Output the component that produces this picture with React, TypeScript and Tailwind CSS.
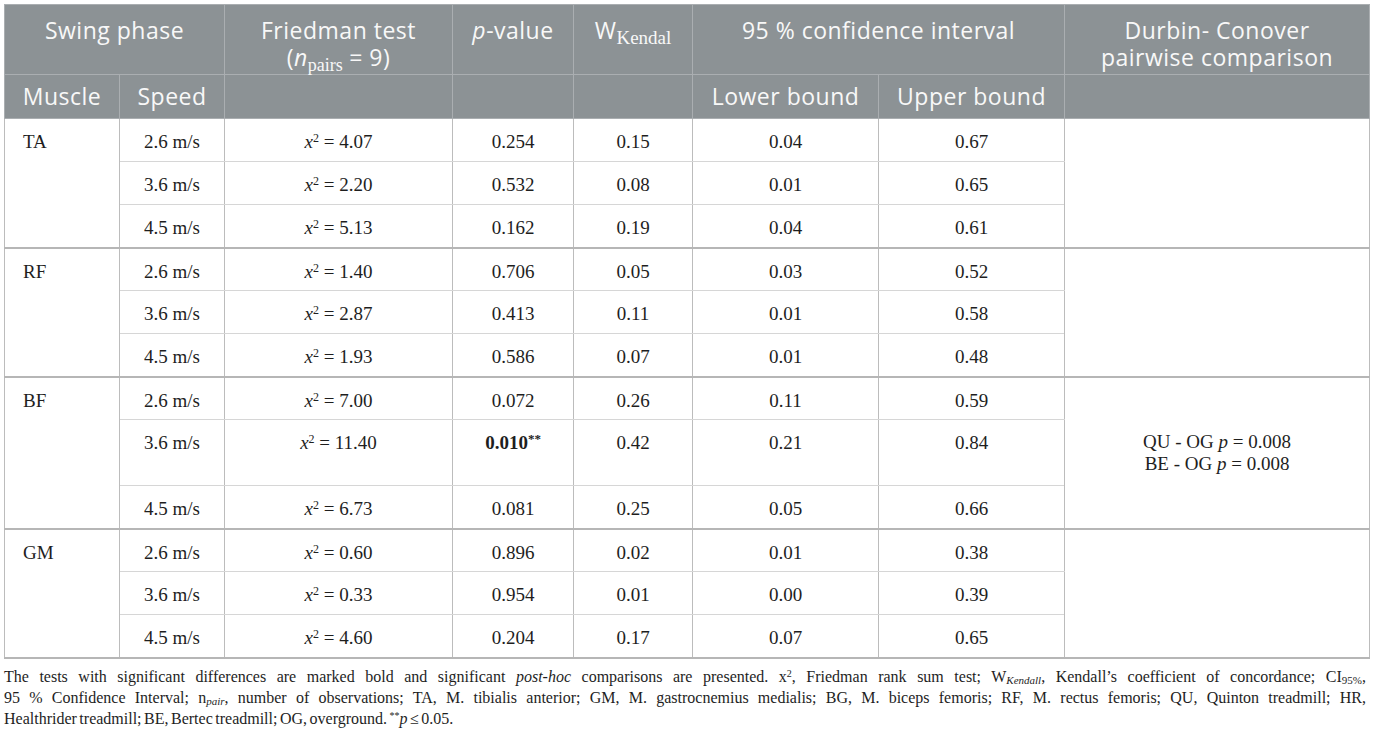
import type { ReactNode } from "react"

type Row = {
  speed: string
  chi: string
  p: ReactNode
  w: string
  lo: string
  hi: string
  tall?: boolean
}

type Group = {
  muscle: string
  rows: Row[]
  durbin?: ReactNode
}

const P = () => <span className="italic">p</span>

const groups: Group[] = [
  {
    muscle: "TA",
    rows: [
      { speed: "2.6 m/s", chi: "4.07", p: "0.254", w: "0.15", lo: "0.04", hi: "0.67" },
      { speed: "3.6 m/s", chi: "2.20", p: "0.532", w: "0.08", lo: "0.01", hi: "0.65" },
      { speed: "4.5 m/s", chi: "5.13", p: "0.162", w: "0.19", lo: "0.04", hi: "0.61" },
    ],
  },
  {
    muscle: "RF",
    rows: [
      { speed: "2.6 m/s", chi: "1.40", p: "0.706", w: "0.05", lo: "0.03", hi: "0.52" },
      { speed: "3.6 m/s", chi: "2.87", p: "0.413", w: "0.11", lo: "0.01", hi: "0.58" },
      { speed: "4.5 m/s", chi: "1.93", p: "0.586", w: "0.07", lo: "0.01", hi: "0.48" },
    ],
  },
  {
    muscle: "BF",
    rows: [
      { speed: "2.6 m/s", chi: "7.00", p: "0.072", w: "0.26", lo: "0.11", hi: "0.59" },
      {
        speed: "3.6 m/s",
        chi: "11.40",
        p: <span className="font-bold">0.010<sup className="text-[13px]">**</sup></span>,
        w: "0.42",
        lo: "0.21",
        hi: "0.84",
        tall: true,
      },
      { speed: "4.5 m/s", chi: "6.73", p: "0.081", w: "0.25", lo: "0.05", hi: "0.66" },
    ],
    durbin: (
      <>
        <div>QU - OG <P /> = 0.008</div>
        <div>BE - OG <P /> = 0.008</div>
      </>
    ),
  },
  {
    muscle: "GM",
    rows: [
      { speed: "2.6 m/s", chi: "0.60", p: "0.896", w: "0.02", lo: "0.01", hi: "0.38" },
      { speed: "3.6 m/s", chi: "0.33", p: "0.954", w: "0.01", lo: "0.00", hi: "0.39" },
      { speed: "4.5 m/s", chi: "4.60", p: "0.204", w: "0.17", lo: "0.07", hi: "0.65" },
    ],
  },
]

const th =
  "bg-[#8c9295] text-[#f8f8f8] font-normal text-center align-top border border-[#aaaeb1] px-2"

export default function App() {
  return (
    <div className="bg-white min-h-[738px] pl-[4px] pt-[4px] font-['Liberation_Serif','Times_New_Roman',serif] text-[#1e1e1e]">
      <table className="table-fixed border-collapse w-[1365px] border border-[#bdbdbd]">
        <colgroup>
          <col className="w-[115px]" />
          <col className="w-[105px]" />
          <col className="w-[228px]" />
          <col className="w-[121px]" />
          <col className="w-[119px]" />
          <col className="w-[186px]" />
          <col className="w-[186px]" />
          <col className="w-[305px]" />
        </colgroup>
        <thead className="font-['Open_Sans',sans-serif] text-[23px] tracking-[0.5px] leading-[27px]">
          <tr className="h-[70px]">
            <th colSpan={2} className={`${th} pt-[12px]`}>Swing phase</th>
            <th className={`${th} pt-[12px]`}>
              Friedman test
              <br />
              (<span className="italic">n</span>
              <sub className="font-['Liberation_Serif',serif] text-[18px] tracking-normal">pairs</sub> = 9)
            </th>
            <th className={`${th} pt-[12px]`}>
              <span className="italic">p</span>-value
            </th>
            <th className={`${th} pt-[12px]`}>
              W<sub className="font-['Liberation_Serif',serif] text-[19px] tracking-normal">Kendal</sub>
            </th>
            <th colSpan={2} className={`${th} pt-[12px]`}>95 % confidence interval</th>
            <th className={`${th} pt-[12px]`}>
              Durbin- Conover
              <br />
              pairwise comparison
            </th>
          </tr>
          <tr className="h-[44px]">
            <th className={`${th} pt-[8px]`}>Muscle</th>
            <th className={`${th} pt-[8px]`}>Speed</th>
            <th className={th} />
            <th className={th} />
            <th className={th} />
            <th className={`${th} pt-[8px]`}>Lower bound</th>
            <th className={`${th} pt-[8px]`}>Upper bound</th>
            <th className={th} />
          </tr>
        </thead>
        <tbody className="text-[19px] leading-[22px]">
          {groups.map((g) =>
            g.rows.map((r, ri) => {
              const rowLine =
                ri === 2 ? "border-b-2 border-b-[#b6b6b6]" : "border-b border-b-[#d6d6d6]"
              const cell = `align-top pt-[12px] text-center border-x border-x-[#bcbcbc] ${rowLine}`
              return (
                <tr key={g.muscle + r.speed} className={r.tall ? "h-[66px]" : "h-[43px]"}>
                  {ri === 0 && (
                    <td
                      rowSpan={3}
                      className="align-top pt-[12px] pl-[18px] text-left border-x border-x-[#bcbcbc] border-b-2 border-b-[#b6b6b6]"
                    >
                      {g.muscle}
                    </td>
                  )}
                  <td className={cell}>{r.speed}</td>
                  <td className={cell}>
                    <span className="italic">x</span>
                    <sup className="text-[12px]">2</sup> = {r.chi}
                  </td>
                  <td className={cell}>{r.p}</td>
                  <td className={cell}>{r.w}</td>
                  <td className={cell}>{r.lo}</td>
                  <td className={cell}>{r.hi}</td>
                  {ri === 0 && (
                    <td
                      rowSpan={3}
                      className="align-middle text-center border-x border-x-[#bcbcbc] border-b-2 border-b-[#b6b6b6]"
                    >
                      {g.durbin}
                    </td>
                  )}
                </tr>
              )
            })
          )}
        </tbody>
      </table>

      <div className="w-[1362px] mt-[7px] text-[16px] leading-[21px] text-[#1e1e1e]">
        <div className="text-justify [text-align-last:justify]">
          The tests with significant differences are marked bold and significant{" "}
          <span className="italic">post-hoc</span> comparisons are presented. x<sup className="text-[10px]">2</sup>,
          Friedman rank sum test; W<sub className="italic text-[11px]">Kendall</sub>, Kendall’s coefficient of
          concordance; CI<sub className="text-[11px]">95%</sub>,
        </div>
        <div className="text-justify [text-align-last:justify]">
          95 % Confidence Interval; n<sub className="italic text-[11px]">pair</sub>, number of observations; TA, M.
          tibialis anterior; GM, M. gastrocnemius medialis; BG, M. biceps femoris; RF, M. rectus femoris; QU, Quinton
          treadmill; HR,
        </div>
        <div className="[word-spacing:-1.5px]">
          Healthrider treadmill; BE, Bertec treadmill; OG, overground. <sup className="text-[10px]">**</sup>
          <span className="italic">p</span> ≤ 0.05.
        </div>
      </div>
    </div>
  )
}
